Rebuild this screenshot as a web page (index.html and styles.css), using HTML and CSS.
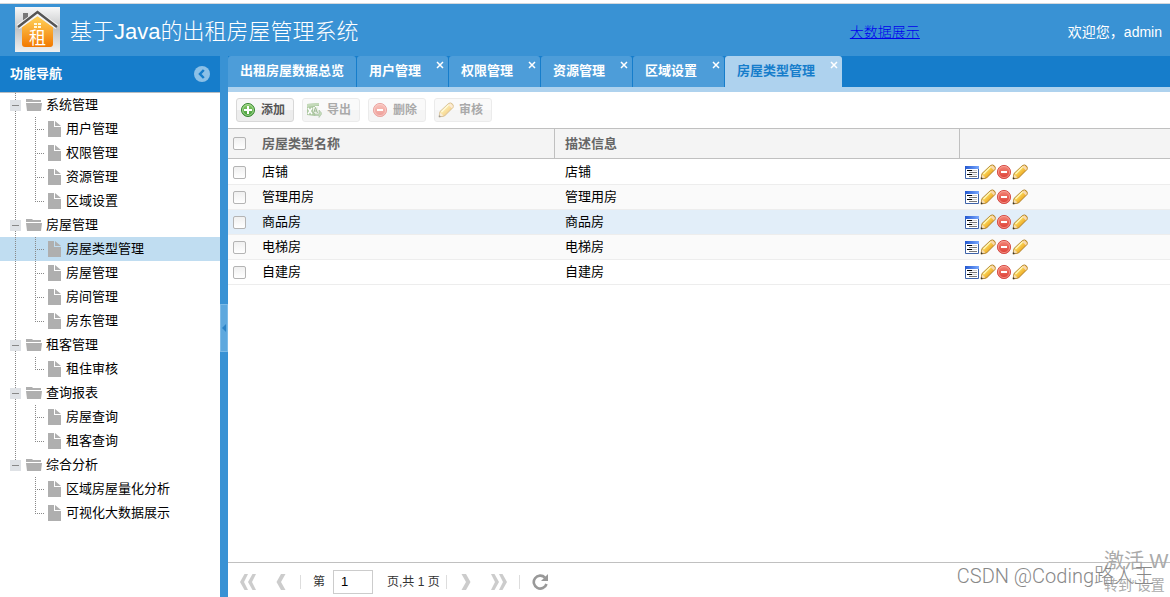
FILE: index.html
```html
<!DOCTYPE html>
<html lang="zh-CN">
<head>
<meta charset="utf-8">
<title>基于Java的出租房屋管理系统</title>
<link rel="stylesheet" href="styles.css">
</head>
<body>
<svg class="sprite" aria-hidden="true">
  <defs>
    <linearGradient id="g-pencil" x1="0" y1="0" x2="1" y2="1"><stop offset="0.3" stop-color="#ffe873"/><stop offset="0.7" stop-color="#eda51c"/></linearGradient>
    <linearGradient id="g-red" x1="0" y1="0" x2="0" y2="1"><stop offset="0" stop-color="#f58a7c"/><stop offset="1" stop-color="#dc3a30"/></linearGradient>
    <linearGradient id="g-green" x1="0" y1="0" x2="0" y2="1"><stop offset="0" stop-color="#8ccc6c"/><stop offset="1" stop-color="#3c9834"/></linearGradient>
    <linearGradient id="g-house" x1="0" y1="0" x2="0" y2="1"><stop offset="0" stop-color="#ffd45c"/><stop offset="1" stop-color="#f27800"/></linearGradient>
    <linearGradient id="g-plate" x1="0" y1="0" x2="0" y2="1"><stop offset="0" stop-color="#f8f8f8"/><stop offset="0.5" stop-color="#c2c4c6"/><stop offset="1" stop-color="#f0f0f0"/></linearGradient>
    <linearGradient id="g-bar" x1="0" y1="0" x2="1" y2="0"><stop offset="0" stop-color="#2458d0"/><stop offset="1" stop-color="#78a8ff"/></linearGradient>
  </defs>
  <symbol id="folder" viewBox="0 0 16 12"><path d="M0 0h6l1 1h8v2H0zM0 4h16l-1 8H1z" fill="#afafaf"/></symbol>
  <symbol id="file" viewBox="0 0 13 16"><path d="M0 0h6v6h7v10H0zM7 0l6 5H7z" fill="#afafaf"/></symbol>
  <symbol id="pencil" viewBox="0 0 16 16"><path d="M1 15l1-5.500L10.500 1.500q2-1.200 3.700.2t.8 3.800L6.500 14z" fill="url(#g-pencil)" stroke="#a87824" stroke-width=".9"/><path d="M10 2.500l4 4 1-2.500-2.500-2.500z" fill="#f8d8b0"/><path d="M2 10.500L5.500 13.500 1.500 14.500z" fill="#f4dcb4"/><path d="M.8 15.200l.5-2.200 1.700 1.700z" fill="#333"/><path d="M3.500 10l7-7" stroke="#fff8b8" stroke-width="1.300"/></symbol>
  <symbol id="remove" viewBox="0 0 16 16"><circle cx="8" cy="8" r="6.600" fill="url(#g-red)" stroke="#d6504a"/><circle cx="8" cy="8" r="5.600" fill="none" stroke="#f7a79d" stroke-width=".7"/><path d="M5 7h6v2H5z" fill="#fff"/></symbol>
  <symbol id="add" viewBox="0 0 16 16"><circle cx="8" cy="8" r="6.500" fill="url(#g-green)" stroke="#34852f"/><circle cx="8" cy="8" r="5.400" fill="none" stroke="#b9e2a4" stroke-width=".8"/><path d="M7 4h2v3h3v2H9v3H7V9H4V7h3z" fill="#fff"/></symbol>
  <symbol id="detail" viewBox="0 0 14 14"><path d="M.5 1.500h13v12H.5z" fill="#fff" stroke="#3d62a8"/><path d="M0 1h14v3H0z" fill="url(#g-bar)"/><path d="M2 5.500h5M2 9.500h5" stroke="#000"/><path d="M4 7.500h8M4 11.500h8" stroke="#777"/><path d="M7 5.500h5M7 9.500h5" stroke="#ccc"/></symbol>
  <symbol id="export" viewBox="0 0 16 16"><path d="M1 2l12-1v3H9v10l-8-1z" fill="#5f9448"/><path d="M1 2l12-1v2L1 5z" fill="#8cb878"/><path d="M2 6l4 6M6 6l-4 6" stroke="#fff" stroke-width="1.400"/><path d="M7 5h5v6H7z" fill="#dcebd0"/><path d="M7.500 11l2-5.500 2 5.500M8 9h3" fill="none" stroke="#427330"/><path d="M9 12h4V8l3 3.500-3 4v-2H9z" fill="#8ab875" stroke="#548148" stroke-width=".6"/></symbol>
  <symbol id="chevron" viewBox="0 0 10 16"><path d="M5 0h4.500L5 8l4.500 8H5L.5 8z"/></symbol>
  <symbol id="double" viewBox="0 0 16 16"><path d="M4.500 0H8L4 8l4 8H4.500L0 8zM12.500 0H16l-4 8 4 8h-3.500L8 8z"/></symbol>
</svg>

<header class="banner">
  <svg class="logo" viewBox="0 0 45 45" role="img" aria-label="租">
    <path d="M0 0h45v45H0z" fill="url(#g-plate)"/>
    <path d="M8 6h5v5l-5 5z" fill="#777"/>
    <path d="M7 20L22.500 9 38 20v17q0 3-3 3H10q-3 0-3-3z" fill="url(#g-house)"/>
    <path d="M3 20L22.500 6 42 20" fill="none" stroke="#f5f5f5" stroke-width="5"/>
    <path d="M3 20L22.500 5 42 20" fill="none" stroke="#555" stroke-width="2.500"/>
    <path d="M19 16h3v2h-3zM23 16h3v2h-3zM19 19h3v2h-3zM23 19h3v2h-3z" fill="#fff9db"/>
    <text x="22.500" y="37" text-anchor="middle" class="logo-text">租</text>
  </svg>
  <h1>基于Java的出租房屋管理系统</h1>
  <a class="bigdata" href="#">大数据展示</a>
  <span class="welcome">欢迎您，admin</span>
</header>

<div class="workspace">
  <aside class="sidebar">
    <div class="side-head">
      <h2>功能导航</h2>
      <button class="collapse" aria-label="收起">
        <svg viewBox="0 0 16 16"><circle cx="8" cy="8" r="8" fill="#8bc0e7"/><path d="M9.800 4L6 8l3.800 4" fill="none" stroke="#167dcb" stroke-width="2.500"/></svg>
      </button>
    </div>
    <ul class="tree">
      <li><div class="node"><i class="toggle"></i><svg class="folder"><use href="#folder"/></svg>系统管理</div>
        <ul>
          <li><svg class="file"><use href="#file"/></svg>用户管理</li>
          <li><svg class="file"><use href="#file"/></svg>权限管理</li>
          <li><svg class="file"><use href="#file"/></svg>资源管理</li>
          <li><svg class="file"><use href="#file"/></svg>区域设置</li>
        </ul></li>
      <li><div class="node"><i class="toggle"></i><svg class="folder"><use href="#folder"/></svg>房屋管理</div>
        <ul>
          <li class="selected"><svg class="file"><use href="#file"/></svg>房屋类型管理</li>
          <li><svg class="file"><use href="#file"/></svg>房屋管理</li>
          <li><svg class="file"><use href="#file"/></svg>房间管理</li>
          <li><svg class="file"><use href="#file"/></svg>房东管理</li>
        </ul></li>
      <li><div class="node"><i class="toggle"></i><svg class="folder"><use href="#folder"/></svg>租客管理</div>
        <ul>
          <li><svg class="file"><use href="#file"/></svg>租住审核</li>
        </ul></li>
      <li><div class="node"><i class="toggle"></i><svg class="folder"><use href="#folder"/></svg>查询报表</div>
        <ul>
          <li><svg class="file"><use href="#file"/></svg>房屋查询</li>
          <li><svg class="file"><use href="#file"/></svg>租客查询</li>
        </ul></li>
      <li><div class="node"><i class="toggle"></i><svg class="folder"><use href="#folder"/></svg>综合分析</div>
        <ul>
          <li><svg class="file"><use href="#file"/></svg>区域房屋量化分析</li>
          <li><svg class="file"><use href="#file"/></svg>可视化大数据展示</li>
        </ul></li>
    </ul>
  </aside>

  <div class="splitter"><button class="grip" aria-label="折叠导航"><svg viewBox="0 0 4 8"><path d="M4 0v8L0 4z" fill="#2b82c5"/></svg></button></div>

  <main class="content">
    <nav class="tabs">
      <div class="tab"><a href="#">出租房屋数据总览</a></div>
      <div class="tab closable"><a href="#">用户管理</a><button class="close" aria-label="关闭用户管理"><svg viewBox="0 0 8 8"><path d="M1 1l6 6M7 1L1 7"/></svg></button></div>
      <div class="tab closable"><a href="#">权限管理</a><button class="close" aria-label="关闭权限管理"><svg viewBox="0 0 8 8"><path d="M1 1l6 6M7 1L1 7"/></svg></button></div>
      <div class="tab closable"><a href="#">资源管理</a><button class="close" aria-label="关闭资源管理"><svg viewBox="0 0 8 8"><path d="M1 1l6 6M7 1L1 7"/></svg></button></div>
      <div class="tab closable"><a href="#">区域设置</a><button class="close" aria-label="关闭区域设置"><svg viewBox="0 0 8 8"><path d="M1 1l6 6M7 1L1 7"/></svg></button></div>
      <div class="tab closable active"><a href="#">房屋类型管理</a><button class="close" aria-label="关闭房屋类型管理"><svg viewBox="0 0 8 8"><path d="M1 1l6 6M7 1L1 7"/></svg></button></div>
    </nav>

    <div class="toolbar">
      <button class="tool"><svg><use href="#add"/></svg>添加</button>
      <button class="tool" disabled><svg><use href="#export"/></svg>导出</button>
      <button class="tool" disabled><svg><use href="#remove"/></svg>删除</button>
      <button class="tool" disabled><svg><use href="#pencil"/></svg>审核</button>
    </div>

    <table class="grid">
      <colgroup><col class="c-check"><col class="c-name"><col class="c-desc"><col></colgroup>
      <thead>
        <tr><th><input type="checkbox" aria-label="全选"></th><th class="ruled">房屋类型名称</th><th class="ruled">描述信息</th><th></th></tr>
      </thead>
      <tbody>
        <tr><td><input type="checkbox" aria-label="选择店铺"></td><td>店铺</td><td>店铺</td><td><div class="ops"><svg class="detail"><use href="#detail"/></svg><svg><use href="#pencil"/></svg><svg><use href="#remove"/></svg><svg><use href="#pencil"/></svg></div></td></tr>
        <tr><td><input type="checkbox" aria-label="选择管理用房"></td><td>管理用房</td><td>管理用房</td><td><div class="ops"><svg class="detail"><use href="#detail"/></svg><svg><use href="#pencil"/></svg><svg><use href="#remove"/></svg><svg><use href="#pencil"/></svg></div></td></tr>
        <tr class="hover"><td><input type="checkbox" aria-label="选择商品房"></td><td>商品房</td><td>商品房</td><td><div class="ops"><svg class="detail"><use href="#detail"/></svg><svg><use href="#pencil"/></svg><svg><use href="#remove"/></svg><svg><use href="#pencil"/></svg></div></td></tr>
        <tr><td><input type="checkbox" aria-label="选择电梯房"></td><td>电梯房</td><td>电梯房</td><td><div class="ops"><svg class="detail"><use href="#detail"/></svg><svg><use href="#pencil"/></svg><svg><use href="#remove"/></svg><svg><use href="#pencil"/></svg></div></td></tr>
        <tr><td><input type="checkbox" aria-label="选择自建房"></td><td>自建房</td><td>自建房</td><td><div class="ops"><svg class="detail"><use href="#detail"/></svg><svg><use href="#pencil"/></svg><svg><use href="#remove"/></svg><svg><use href="#pencil"/></svg></div></td></tr>
      </tbody>
    </table>

    <footer class="pager">
      <button aria-label="首页"><svg class="wide"><use href="#double"/></svg></button>
      <button aria-label="上一页"><svg><use href="#chevron"/></svg></button>
      <span class="bar"></span>
      <label for="page">第</label>
      <input id="page" type="text" value="1">
      <span class="total">页,共 1 页</span>
      <span class="bar"></span>
      <button aria-label="下一页"><svg class="flip"><use href="#chevron"/></svg></button>
      <button aria-label="末页"><svg class="wide flip"><use href="#double"/></svg></button>
      <span class="bar"></span>
      <button aria-label="刷新"><svg class="wide" viewBox="0 0 16 16"><path d="M13 3.600A6.500 6.500 0 1 0 14.500 10" fill="none" stroke="#999" stroke-width="2.600"/><path d="M16 0v7H9z" fill="#999"/></svg></button>
    </footer>
  </main>
</div>

<div class="activate"><p class="activate-title">激活 W</p><p>转到“设置</p></div>
<div class="credit">CSDN @Coding路人王</div>
</body>
</html>
```
FILE: styles.css
```css
* { box-sizing: border-box; }

body {
  margin: 0;
  height: 100vh;
  display: flex;
  flex-direction: column;
  position: relative;
  overflow: hidden;
  font: 13px/24px "Liberation Sans", "Noto Sans CJK SC", sans-serif;
  color: #000;
  background: #fff;
}

h1, h2, p, ul { margin: 0; padding: 0; font-weight: normal; }
ul { list-style: none; }
button { padding: 0; border: 0; background: none; font: inherit; }
svg { display: block; flex: none; }
.sprite { position: absolute; width: 0; height: 0; }

/* Banner */
.banner {
  display: flex;
  align-items: center;
  margin-top: 3px;
  height: 53px;
  padding: 0 8px 2px 15px;
  border-top: 1px solid #d4d8dc;
  background: #3992d4;
  color: #fff;
  flex: none;
}
.logo { width: 45px; height: 45px; }
.logo-text { font: 17px "Noto Sans CJK SC", sans-serif; fill: #fff; }
.banner h1 { margin-left: 10px; padding-top: 6px; font-size: 22px; line-height: 32px; font-weight: 300; white-space: nowrap; }
.bigdata { margin-left: auto; padding-top: 6px; font-size: 14px; color: #0000ee; font-weight: 300; }
.welcome { margin-left: 148px; padding-top: 6px; font-size: 14px; white-space: nowrap; }

.workspace { display: flex; flex: 1; min-height: 0; }

/* Navigation tree */
.sidebar { width: 220px; flex: none; }
.side-head {
  display: flex;
  align-items: center;
  justify-content: space-between;
  height: 37px;
  padding: 0 10px;
  background: #167dcb;
  border-bottom: 1px solid #b8bcc0;
  color: #fff;
}
.side-head h2 { font-size: 13px; font-weight: bold; }
.collapse svg { width: 16px; height: 16px; }

.tree > li {
  background: repeating-linear-gradient(#888 0 1px, transparent 1px 2px) 15px 0 / 1px 100% no-repeat;
}
.tree > li:last-child { background-size: 1px 12px; }
.node { display: flex; align-items: center; height: 24px; padding-left: 10px; }
.toggle {
  width: 11px;
  height: 11px;
  background: linear-gradient(#888, #888) center / 7px 1px no-repeat #dfe2e6;
}
.folder { width: 16px; height: 12px; margin: 0 4px 0 5px; }
.tree ul li {
  display: flex;
  align-items: center;
  height: 24px;
  padding-left: 48px;
  background:
    repeating-linear-gradient(#888 0 1px, transparent 1px 2px) 35px 0 / 1px 100% no-repeat,
    repeating-linear-gradient(90deg, #888 0 1px, transparent 1px 2px) 37px 12px / 8px 1px no-repeat;
}
.tree ul li:last-child { background-size: 1px 13px, 8px 1px; }
.tree ul .selected {
  background:
    repeating-linear-gradient(#888 0 1px, transparent 1px 2px) 15px 0 / 1px 100% no-repeat,
    repeating-linear-gradient(#888 0 1px, transparent 1px 2px) 35px 0 / 1px 100% no-repeat,
    repeating-linear-gradient(90deg, #888 0 1px, transparent 1px 2px) 37px 12px / 8px 1px no-repeat,
    #c0ddf1;
}
.file { width: 13px; height: 16px; margin-right: 5px; }

/* Splitter */
.splitter { display: flex; align-items: center; width: 8px; padding-top: 2px; flex: none; background: #3992d4; }
.grip {
  display: flex;
  align-items: center;
  justify-content: center;
  width: 8px;
  height: 48px;
  background: #5ea8de;
  border: 1px solid #7dbae6;
}
.grip svg { width: 4px; height: 8px; }

.content { display: flex; flex-direction: column; flex: 1; min-width: 0; }

/* Tabs */
.tabs {
  display: flex;
  gap: 1px;
  height: 36px;
  background: #167dcb;
  border-bottom: 5px solid #aed2ee;
  flex: none;
}
.tab {
  display: flex;
  padding: 0 12px;
  background: #4d9dd9;
  border-radius: 3px 3px 0 0;
  font-weight: bold;
  line-height: 30px;
  white-space: nowrap;
}
.tab a { color: #fff; text-decoration: none; }
.closable { padding-right: 4px; }
.close { width: 8px; height: 8px; margin: 5px 0 0 15px; }
.close svg { width: 8px; height: 8px; stroke: #fff; stroke-width: 1.500; }
.active { background: #aed2ee; }
.active a { color: #167dcb; }

/* Toolbar */
.toolbar { display: flex; gap: 8px; padding: 6px 8px; height: 36px; flex: none; }
.tool {
  display: flex;
  align-items: center;
  gap: 5px;
  height: 24px;
  padding: 0 8px 0 3px;
  border: 1px solid #d8d8d8;
  border-radius: 3px;
  background: linear-gradient(#f7f7f7 50%, #ededed 50%);
  color: #555;
  font-weight: bold;
  font-size: 12px;
}
.tool svg { width: 16px; height: 16px; }
.tool:disabled { opacity: 0.5; }

/* Data grid */
.grid { width: 100%; table-layout: fixed; border-collapse: separate; border-spacing: 0; }
.c-check { width: 24px; }
.c-name { width: 303px; }
.c-desc { width: 405px; }
.grid th {
  height: 31px;
  padding: 0 10px;
  border-top: 1px solid #c0c0c0;
  border-bottom: 1px solid #c0c0c0;
  background: #f4f4f4;
  color: #666;
  text-align: left;
}
.grid .ruled { border-right: 1px solid #c0c0c0; }
.grid td { height: 25px; padding: 0 10px; border-bottom: 1px solid #ededed; }
.grid tbody tr:first-child td { border-top: 1px solid #fff; }
.grid tr > :first-child { padding: 0 5px; }
.grid td:last-child { padding: 0 5px; }
.grid tbody tr:nth-child(even) { background: #fafafa; }
.grid tbody .hover { background: #e2eef9; }
.grid input {
  display: block;
  appearance: none;
  width: 13px;
  height: 13px;
  margin: 0;
  border: 1px solid #b4b4b4;
  border-radius: 2px;
  background: linear-gradient(#f0f0f0, #fff);
}
.ops { display: flex; align-items: center; }
.ops svg { width: 16px; height: 16px; }
.ops .detail { width: 14px; height: 14px; margin-right: 1px; }

/* Pager */
.pager {
  display: flex;
  align-items: center;
  margin-top: auto;
  height: 35px;
  padding: 3px 12px 0;
  border-top: 1px solid #c0c0c0;
  color: #333;
  font-size: 12px;
}
.pager svg { width: 10px; height: 16px; fill: #ccc; }
.pager .wide { width: 16px; }
.pager .flip { transform: scaleX(-1); }
.pager button + button { margin-left: 20px; }
.bar { width: 1px; height: 14px; margin: 0 12px 0 14px; background: #ddd; }
.total + .bar { margin: 0 14px 0 6px; }
.bar:nth-last-child(2) { margin: 0 12px; }
.pager input {
  width: 40px;
  height: 24px;
  margin: 0 14px 0 8px;
  padding: 0 7px;
  border: 1px solid #ccc;
  font: 13px "Liberation Sans", sans-serif;
}

/* Overlaid notices */
.activate {
  position: absolute;
  right: 0;
  bottom: 0;
  width: 66px;
  overflow: hidden;
  color: #aaa;
  font-size: 14px;
  font-weight: 300;
  white-space: nowrap;
  pointer-events: none;
}
.activate-title { font-size: 20px; }
.credit {
  position: absolute;
  right: 16px;
  bottom: 9px;
  color: #888;
  font-family: Roboto, "Noto Sans CJK SC", sans-serif;
  font-size: 20px;
  font-weight: 300;
  pointer-events: none;
}
```
